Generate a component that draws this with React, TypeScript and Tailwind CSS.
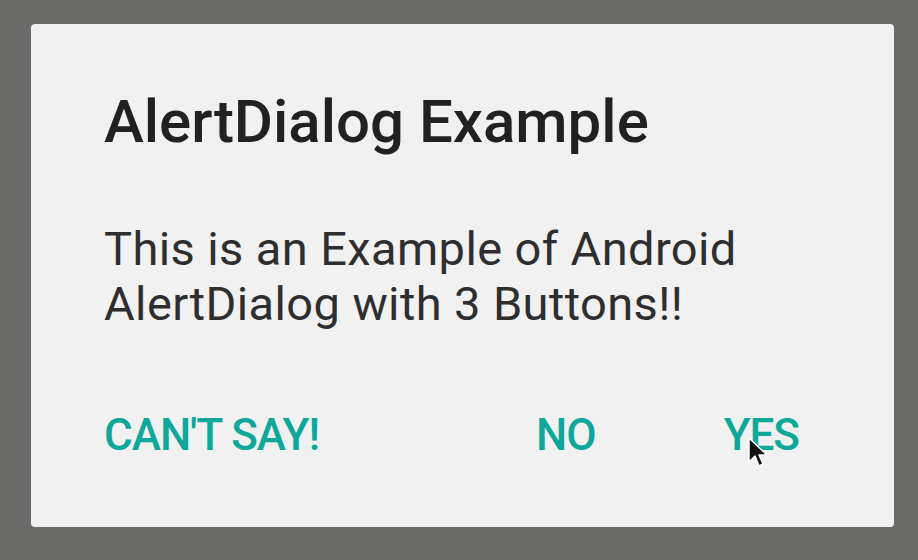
export default function App() {
  return (
    <div className="w-[918px] h-[560px] bg-[#6b6c6a] pt-[24px] pl-[31px]" style={{ fontFamily: "Roboto, 'Noto Sans', sans-serif" }}>
      <div className="relative w-[863px] h-[503px] rounded-[4px] bg-[#f1f1f1] pl-[73px] pt-[63px]">
        <h1 className="text-[60px] leading-[70px] font-medium text-[#212121]">AlertDialog Example</h1>
        <p className="mt-[64px] text-[47px] leading-[55px] tracking-[0.4px] text-[#2e2e2e]">
          This is an Example of Android
          <br />
          AlertDialog with 3 Buttons!!
        </p>
        <div className="mt-[78px] flex items-center text-[44px] leading-[52px] font-medium tracking-[-1px] uppercase text-[#0ea89b]">
          <span>Can't say!</span>
          <span className="ml-auto">No</span>
          <span className="ml-[128px] mr-[95px]">Yes</span>
        </div>
        <svg className="absolute left-[716px] top-[412px]" width="22" height="34" viewBox="0 0 22 34">
          <path d="M2 2 L2 26 L8 20 L12 30 L16 28 L12 19 L20 19 Z" fill="#111" stroke="#fff" strokeWidth="1.5" strokeLinejoin="round" />
        </svg>
      </div>
    </div>
  );
}
